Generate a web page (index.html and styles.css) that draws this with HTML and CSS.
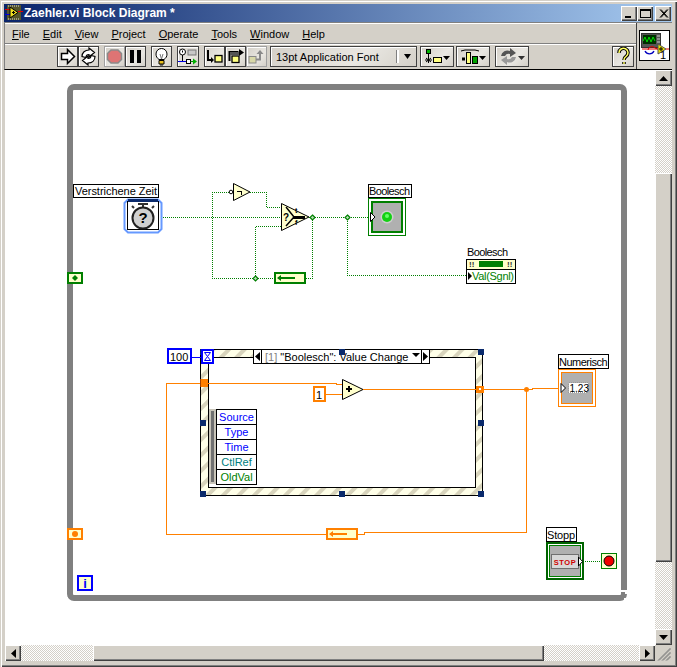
FILE: index.html
```html
<!DOCTYPE html>
<html lang="en">
<head>
<meta charset="utf-8">
<title>Zaehler.vi Block Diagram *</title>
<link rel="stylesheet" href="styles.css">
</head>
<body>
<div class="window">
  <header class="titlebar">
    <svg class="title-icon" width="18" height="16" viewBox="0 0 18 16">
      <rect x="2" y="0" width="14" height="15" fill="#55552a"/>
      <path d="M3 1h1M5 1h1M7 1h1M9 1h1M11 1h1M13 1h1M3 14h1M5 14h1M7 14h1M9 14h1M11 14h1M13 14h1" stroke="#ddd"/>
      <path d="M0 4.500h5" stroke="#e00000" class="crisp"/>
      <path d="M0 9.500h5" stroke="#0000e0" class="crisp"/>
      <path d="M5 2l8 5.500-8 5.500z" fill="#f0e020" stroke="#000"/>
      <path d="M13 6.500h5" stroke="#e00000" class="crisp"/>
      <path d="M7 7.500h3M8.500 6v3" stroke="#000" class="crisp"/>
    </svg>
    <span class="title-text">Zaehler.vi Block Diagram *</span>
    <div class="win-btns">
      <button class="win-btn"><svg width="13" height="11"><rect x="2" y="8" width="6" height="2" fill="#000"/></svg></button>
      <button class="win-btn"><svg width="13" height="11"><path d="M1.500 1.500h10v8h-10z M1 2.500h11" fill="none" stroke="#000" class="crisp"/></svg></button>
      <button class="win-btn win-close"><svg width="13" height="11"><path d="M3 1.500l7 8M4 1.500l7 8M10 1.500l-7 8M11 1.500l-7 8" stroke="#000" fill="none"/></svg></button>
    </div>
  </header>

  <div class="head">
    <div class="head-main">
      <nav class="menubar">
        <span class="menu-item"><u>F</u>ile</span>
        <span class="menu-item"><u>E</u>dit</span>
        <span class="menu-item"><u>V</u>iew</span>
        <span class="menu-item"><u>P</u>roject</span>
        <span class="menu-item"><u>O</u>perate</span>
        <span class="menu-item"><u>T</u>ools</span>
        <span class="menu-item"><u>W</u>indow</span>
        <span class="menu-item"><u>H</u>elp</span>
      </nav>
      <div class="toolbar">
        <div class="tb-group">
          <button class="tb"><svg width="19" height="19" viewBox="0 0 19 19"><path d="M3.500 6.500h6v-4l7 7-7 7v-4h-6z" fill="#fff" stroke="#000" stroke-width="1.500"/></svg></button>
          <button class="tb"><svg width="19" height="19" viewBox="0 0 19 19"><path id="cyc" d="M3 9.500C3 5.500 6 3 10 3V1l5.500 4.500L10 10V7.500C8 7.500 7 8.500 7 10.500z" fill="#fff" stroke="#000" stroke-width="1.200"/><path d="M16 9.500C16 13.500 13 16 9 16v2l-5.500-4.500L9 9v2.500c2 0 3-1 3-3z" fill="#fff" stroke="#000" stroke-width="1.200"/></svg></button>
        </div>
        <div class="tb-group">
          <button class="tb tb-off"><svg width="19" height="19" viewBox="0 0 19 19"><path d="M6 3h7l3.500 3.500v6L13 16H6l-3.500-3.500v-6z" fill="#de7474" stroke="#8a8a8a" stroke-width="1.500"/></svg></button>
          <button class="tb"><svg width="19" height="19" viewBox="0 0 19 19"><path d="M4 3h4v13H4zM11 3h4v13h-4z" fill="#000"/></svg></button>
        </div>
        <div class="tb-group">
          <button class="tb"><svg width="19" height="19" viewBox="0 0 19 19"><path d="M7 12.500C5 11 4 9.500 4 7a5.500 5.500 0 0 1 11 0c0 2.500-1 4-3 5.500z" fill="#fff" stroke="#000"/><path d="M7 13.500h5v3.500H7z" fill="#e8c020" stroke="#000"/><path d="M8 18h3" stroke="#000"/><path d="M8 7l1.500 5M11 7l-1.500 5" stroke="#777" fill="none"/></svg></button>
        </div>
        <div class="tb-group">
          <button class="tb tb-wide"><svg width="20" height="19" viewBox="0 0 20 19"><circle cx="4.500" cy="5" r="3" fill="#fff" stroke="#000"/><path d="M4.500 3.500v2M4.500 7v0" stroke="#000"/><path d="M4.500 8v6" stroke="#000"/><rect x="10" y="3" width="8" height="5" fill="#c8c8c8" stroke="#777"/><path d="M0 14.500h9" stroke="#0000e0"/><rect x="8.500" y="12.500" width="4" height="4" fill="#fff" stroke="#000"/><path d="M12.500 14.500h4" stroke="#009000"/><path d="M15 11.500l4 3-4 3z" fill="#00b000"/></svg></button>
        </div>
        <div class="tb-group">
          <button class="tb"><svg width="19" height="19" viewBox="0 0 19 19"><path d="M3 3v10h5" fill="none" stroke="#000" stroke-width="2"/><path d="M6 10l3 3-3 3z" fill="#000"/><rect x="10" y="8.500" width="7" height="6.500" fill="#ffff80" stroke="#000" stroke-width="1.300"/></svg></button>
          <button class="tb"><svg width="19" height="19" viewBox="0 0 19 19"><path d="M3.500 14V5h9" fill="none" stroke="#000" stroke-width="2"/><path d="M13 2l5 3.500-5 3.500z" fill="#000"/><path d="M4 5h9v3H4z" fill="#555"/><rect x="6" y="9" width="7" height="6.500" fill="#ffff80" stroke="#000" stroke-width="1.300"/></svg></button>
          <button class="tb tb-off"><svg width="19" height="19" viewBox="0 0 19 19"><rect x="2" y="9.500" width="7" height="6.500" fill="#d8d8a8" stroke="#8a8a8a"/><path d="M9 12.500h4V6" fill="none" stroke="#8a8a8a" stroke-width="2"/><path d="M9.500 7l3.500-4 3.500 4z" fill="#8a8a8a"/></svg></button>
        </div>
        <button class="font-select">
          <span class="font-label">13pt Application Font</span>
          <span class="font-arrow"><svg width="9" height="5"><path d="M1 0h7L4.500 5z" fill="#000"/></svg></span>
        </button>
        <button class="tb tb-menu"><svg width="26" height="19" viewBox="0 0 26 19"><rect x="2.500" y="2.500" width="4" height="4" fill="#00b000" stroke="#000"/><path d="M4.500 7v3M1 13h7M4.500 10v6M2 11l5 4M7 11l-5 4" stroke="#000" fill="none"/><rect x="9.500" y="10.500" width="8" height="5" fill="#ffff80" stroke="#000"/><path d="M19 9h7l-3.500 4z" fill="#000"/></svg></button>
        <button class="tb tb-menu tb-menu-end"><svg width="26" height="19" viewBox="0 0 26 19"><path d="M1 4l4-1h10l4 1" fill="none" stroke="#000"/><rect x="2" y="10.500" width="3" height="3" fill="#000"/><rect x="6.500" y="5.500" width="4" height="11" fill="#ffff80" stroke="#000"/><rect x="12.500" y="9.500" width="5" height="7" fill="#00a000" stroke="#000"/><path d="M19 9h7l-3.500 4z" fill="#000"/></svg></button>
        <button class="tb tb-menu"><svg width="26" height="19" viewBox="0 0 26 19"><path d="M2 9a6.500 6.500 0 0 1 9-5V1l6 5-6 4V7a4 4 0 0 0-5 2z" fill="#555"/><path d="M17 10a6.500 6.500 0 0 1-9 5v3l-6-5 6-4v3a4 4 0 0 0 5-2z" fill="#999"/><path d="M19 9h7l-3.500 4z" fill="#333"/></svg></button>
        <button class="tb tb-help"><svg width="19" height="19" viewBox="0 0 19 19"><path d="M5 6a4.500 4.500 0 1 1 7 3.500c-1.500 1-2 1.500-2 3.500M10 15v2" fill="none" stroke="#000" stroke-width="3.500"/><path d="M5 6a4.500 4.500 0 1 1 7 3.500c-1.500 1-2 1.500-2 3.500M10 15v2" fill="none" stroke="#ffff60" stroke-width="1.500"/></svg></button>
      </div>
    </div>
    <aside class="vi-panel">
      <div class="vi-icon">
        <svg width="29" height="29" viewBox="0 0 29 29">
          <rect x="1.500" y="2.500" width="19" height="14" fill="#555" stroke="#333"/>
          <rect x="3" y="4" width="13" height="9" fill="#003000"/>
          <path d="M3 10l2-4 2 5 2-5 2 5 2-5 2 4" fill="none" stroke="#00e000"/>
          <path d="M17 5h3M17 8h3M17 11h3" stroke="#ccc"/>
          <path d="M5 20a5 5 0 0 0 9 0" fill="none" stroke="#0000c0" stroke-width="1.300"/>
          <path d="M8 19a4 4 0 0 1 7-2l8 3" fill="none" stroke="#e00000"/>
          <path d="M2 18h20" stroke="#e00000"/>
          <path d="M18 13l8 5-8 5z" fill="#e8e000" stroke="#555"/>
          <path d="M19 18h4M21 16v4" stroke="#000"/>
          <path d="M26 18h3" stroke="#e00000"/>
          <text x="20" y="28" class="vi-num">1</text>
        </svg>
      </div>
    </aside>
  </div>

  <div class="workspace">
    <main class="canvas">
      <svg class="diagram" width="650" height="575" viewBox="5 70 650 575">
        <defs>
          <pattern id="stripes" patternUnits="userSpaceOnUse" width="11" height="11" patternTransform="rotate(45)">
            <rect width="11" height="11" fill="#ffffe8"/>
            <rect width="4" height="11" fill="#d8d4bc"/>
          </pattern>
        </defs>

        <!-- While loop -->
        <rect class="loop" x="70" y="87" width="554" height="511" rx="4"/>
        <path class="white-fill crisp" d="M621 590h6v2h-6zM625 592h2v2h-2zM624 598h3v3h-3z"/>
        <path class="white-fill crisp" d="M67 597h1v4h-1zM68 599h1v2h-1z"/>

        <!-- Boolean wires -->
        <g class="wire-bool crisp">
          <path d="M163 217.500H369"/>
          <path d="M229 192.500H212.500V278.500H274"/>
          <path d="M250 192.500H266.500V207.500H281"/>
          <path d="M255.500 278V226.500H281"/>
          <path d="M306 278.500H312.500V217"/>
          <path d="M347.500 217V275.500H466"/>
          <path d="M585 561.500H601"/>
        </g>
        <g class="junc-bool">
          <path d="M312.500 215l2.500 2.500-2.500 2.500-2.500-2.500z"/>
          <path d="M347.500 215l2.500 2.500-2.500 2.500-2.500-2.500z"/>
          <path d="M255.500 276l2.500 2.500-2.500 2.500-2.500-2.500z"/>
        </g>

        <!-- Shift registers -->
        <rect class="sr sr-bool crisp" x="68" y="273" width="14" height="10"/>
        <path class="fill-bool" d="M75 275l3 3-3 3-3-3z"/>
        <rect class="sr sr-bool crisp" x="275" y="273" width="30" height="10"/>
        <path class="fill-bool" d="M281 275v2h14v2h-14v2l-4-3z"/>

        <!-- Elapsed time express VI -->
        <rect class="label-box crisp" x="73.500" y="184.500" width="85" height="13"/>
        <text class="t" x="75" y="195" textLength="82">Verstrichene Zeit</text>
        <path class="ev-frame" d="M128 199.500h30l3.500 3.500v26l-3.500 3.500h-30l-3.500-3.500v-26z"/>
        <rect class="ev-inner crisp" x="127.500" y="201.500" width="31" height="28"/>
        <rect class="fill-navy crisp" x="128" y="199" width="30" height="3"/>
        <rect class="fill-dark crisp" x="138" y="203" width="10" height="2"/>
        <rect class="fill-dark crisp" x="142" y="204" width="2" height="3"/>
        <path class="stroke-dark" d="M134 208l-2-2M152 208l2-2"/>
        <circle class="clock" cx="143" cy="218" r="10.500"/>
        <text class="clock-q" x="143" y="223">?</text>

        <!-- Not -->
        <path class="prim" d="M233.500 183.500l16.500 8.500-16.500 8.500z"/>
        <circle class="not-dot" cx="231" cy="192" r="1.800"/>
        <path class="stroke-black crisp" d="M237 191.500h4v3"/>

        <!-- Select -->
        <path class="prim" d="M281.500 203.500l27.500 13.500-27.500 13.500z"/>
        <path class="sel-y" d="M286 207l8 10-8 9"/>
        <path class="sel-y-thick crisp" d="M293 217h12"/>
        <text class="sel-q" x="283" y="221">?</text>
        <text class="sel-t" x="295" y="213">t</text>
        <text class="sel-t" x="295" y="225">f</text>

        <!-- Boolesch LED -->
        <rect class="label-box crisp" x="368.500" y="184.500" width="43" height="13"/>
        <text class="t" x="369" y="195" textLength="41">Boolesch</text>
        <rect class="term-outer-bool crisp" x="368.500" y="198.500" width="37" height="37"/>
        <rect class="term-inner-bool crisp" x="372" y="202" width="30" height="30"/>
        <path class="term-arrow" d="M370.500 212.500l4.500 4.500-4.500 4.500z"/>
        <circle class="led-halo" cx="387" cy="217" r="6.500"/>
        <circle class="led" cx="387" cy="217" r="5"/>
        <circle class="led-hi" cx="387" cy="216" r="2"/>

        <!-- Boolesch property node -->
        <text class="t" x="467" y="256" textLength="41">Boolesch</text>
        <rect class="node-head crisp" x="466.500" y="259.500" width="49" height="10"/>
        <rect class="node-body crisp" x="466.500" y="269.500" width="49" height="14"/>
        <rect class="fill-bool crisp" x="479" y="261" width="24" height="6"/>
        <text class="bang" x="469" y="267">!!</text>
        <text class="bang" x="507" y="267">!!</text>
        <path class="fill-black" d="M468 272l4 4-4 4z"/>
        <text class="t t-bool" x="472" y="280" textLength="42">Val(Sgnl)</text>

        <!-- Event structure -->
        <rect class="frame" x="200.500" y="349.500" width="282" height="146"/>
        <rect class="frame-in crisp" x="208.500" y="357.500" width="267" height="130"/>
        <rect class="selector crisp" x="253.500" y="349.500" width="176" height="14"/>
        <path class="stroke-black crisp" d="M261.500 350v13M421.500 350v13"/>
        <path class="fill-black" d="M260 352v9l-5-4.500zM423 352v9l5-4.500z"/>
        <text class="t" x="265" y="361"><tspan class="t-gray">[1]</tspan> "Boolesch": Value Change</text>
        <path class="fill-black" d="M412 353h8l-4 4z"/>
        <g class="fill-navy crisp">
          <rect x="200" y="349" width="6" height="6"/>
          <rect x="339" y="349" width="6" height="6"/>
          <rect x="478" y="349" width="6" height="6"/>
          <rect x="200" y="420" width="6" height="6"/>
          <rect x="478" y="420" width="6" height="6"/>
          <rect x="200" y="491" width="6" height="6"/>
          <rect x="339" y="491" width="6" height="6"/>
          <rect x="478" y="491" width="6" height="6"/>
        </g>

        <!-- Timeout -->
        <path class="wire-blue crisp" d="M192 357.500H202"/>
        <rect class="num-box num-blue crisp" x="168" y="349" width="23" height="14"/>
        <text class="t" x="170" y="361">100</text>
        <rect class="num-box num-blue crisp" x="202" y="350" width="11" height="13"/>
        <path class="hourglass" d="M204.500 352.500h6l-3 4 3 4h-6l3-4z"/>

        <!-- Event data node -->
        <rect class="ed-side crisp" x="209" y="409" width="7.500" height="75"/>
        <rect class="ed-bar crisp" x="211" y="411" width="3" height="71"/>
        <g class="ed-row crisp">
          <rect x="216.500" y="409.500" width="40" height="15"/>
          <rect x="216.500" y="424.500" width="40" height="15"/>
          <rect x="216.500" y="439.500" width="40" height="15"/>
          <rect x="216.500" y="454.500" width="40" height="15"/>
          <rect x="216.500" y="469.500" width="40" height="15"/>
        </g>
        <text class="t t-mid t-blue" x="236.500" y="421">Source</text>
        <text class="t t-mid t-blue" x="236.500" y="436">Type</text>
        <text class="t t-mid t-blue" x="236.500" y="451">Time</text>
        <text class="t t-mid t-teal" x="236.500" y="466">CtlRef</text>
        <text class="t t-mid t-bool" x="236.500" y="481">OldVal</text>

        <!-- Numeric wires -->
        <g class="wire-num crisp">
          <path d="M342 384.500H336.500V383.500H166.500V534.500H327"/>
          <path d="M326 394.500H342"/>
          <path d="M363 389.500H532.500V388.500H558"/>
          <path d="M526.500 389V532.500H364.500V534.500H358"/>
        </g>
        <circle class="fill-num" cx="526.500" cy="389.500" r="2.500"/>

        <rect class="fill-num crisp" x="200" y="379" width="8" height="8"/>
        <path class="tunnel-edge crisp" d="M200.500 379v8"/>
        <rect class="fill-num crisp" x="476" y="386" width="8" height="7"/>
        <rect class="white-fill crisp" x="479" y="388" width="2" height="2"/>

        <rect class="num-box num-orange crisp" x="314" y="387" width="11" height="14"/>
        <text class="t" x="316" y="399">1</text>

        <path class="prim" d="M342.500 379.500l20.500 10-20.500 10z"/>
        <path class="stroke-black-2 crisp" d="M346 389h6M349 386v6"/>

        <!-- Numerisch -->
        <rect class="label-box crisp" x="558.500" y="354.500" width="50" height="14"/>
        <text class="t" x="559" y="366" textLength="48.500">Numerisch</text>
        <rect class="term-outer-num crisp" x="558.500" y="369.500" width="37" height="37"/>
        <rect class="term-inner-num crisp" x="561.500" y="372.500" width="31" height="31"/>
        <path class="term-arrow" d="M561 383.500l4.500 4.500-4.500 4.500z"/>
        <rect class="num-ind crisp" x="568.500" y="382.500" width="19" height="10"/>
        <text class="t-small" x="569.500" y="392">1.23</text>

        <!-- Orange shift registers -->
        <rect class="sr sr-num crisp" x="68" y="529" width="14" height="10"/>
        <circle class="fill-num" cx="75" cy="534" r="3"/>
        <rect class="sr sr-num crisp" x="327" y="529" width="30" height="10"/>
        <path class="fill-num" d="M333 531v2h14v2h-14v2l-4-3z"/>

        <!-- Iteration terminal -->
        <rect class="num-blue-term crisp" x="78" y="576" width="14" height="14"/>
        <text class="i-term" x="85" y="588">i</text>

        <!-- Stop -->
        <rect class="label-box crisp" x="546.500" y="527.500" width="30" height="14"/>
        <text class="t" x="547" y="539" textLength="28">Stopp</text>
        <rect class="term-outer-stop crisp" x="547" y="543" width="36" height="36"/>
        <rect class="term-inner-stop crisp" x="549.500" y="545.500" width="31" height="31"/>
        <rect class="stop-btn crisp" x="551.500" y="554.500" width="27" height="14"/>
        <text class="stop-text" x="565" y="564.500">STOP</text>
        <path class="term-arrow" d="M578.500 557l4 4.500-4 4.500z"/>

        <rect class="cond crisp" x="601.500" y="553.500" width="15" height="15"/>
        <circle class="cond-dot" cx="609" cy="561" r="5"/>
      </svg>
    </main>

    <div class="vscroll">
      <button class="sb-btn"><svg width="9" height="5"><path d="M4.500 0L9 5H0z" fill="#000"/></svg></button>
      <div class="track track-a"></div>
      <div class="thumb thumb-v"></div>
      <div class="track"></div>
      <button class="sb-btn"><svg width="9" height="5"><path d="M0 0h9L4.500 5z" fill="#000"/></svg></button>
    </div>

    <div class="hscroll">
      <button class="sb-btn"><svg width="5" height="9"><path d="M5 0v9L0 4.500z" fill="#000"/></svg></button>
      <div class="track track-b"></div>
      <div class="thumb thumb-h"></div>
      <div class="track"></div>
      <button class="sb-btn"><svg width="5" height="9"><path d="M0 0l5 4.500L0 9z" fill="#000"/></svg></button>
    </div>
    <div class="grip">
      <svg width="17" height="16"><path d="M15.500 3L3 15.500M15.500 4L4 15.500M15.500 7L7 15.500M15.500 8L8 15.500M15.500 11L11 15.500M15.500 12L12 15.500" stroke="#808080"/></svg>
    </div>
  </div>
</div>
</body>
</html>
```
FILE: styles.css
```css
* { box-sizing: border-box; }
html, body { margin: 0; padding: 0; }
body { font-family: "Liberation Sans", sans-serif; font-size: 11px; color: #000; }
button { padding: 0; margin: 0; font: inherit; color: inherit; }

.window {
  width: 677px;
  height: 667px;
  background: #d4d0c8;
  padding: 4px 5px 5px 4px;
  overflow: hidden;
  box-shadow: inset 1px 1px 0 #d4d0c8, inset 2px 2px 0 #fff, inset -1px -1px 0 #404040, inset -2px -2px 0 #808080;
  display: flex;
  flex-direction: column;
}

.titlebar {
  height: 18px;
  flex: none;
  display: flex;
  align-items: center;
  background: linear-gradient(90deg, #0a246a, #a6caf0);
}
.title-icon { margin: 0 1px 0 1px; flex: none; }
.title-text { color: #fff; font-weight: 700; font-size: 12px; white-space: nowrap; }
.win-btns { margin-left: auto; display: flex; margin-right: 1px; }
.win-btn {
  width: 16px;
  height: 15px;
  display: flex;
  align-items: center;
  justify-content: center;
  background: #d4d0c8;
  border: 0;
  box-shadow: inset 1px 1px 0 #fff, inset -1px -1px 0 #404040, inset -2px -2px 0 #808080;
}
.win-close { margin-left: 2px; }

.head {
  flex: none;
  height: 48px;
  display: flex;
  border-left: 1px solid #808080;
  border-top: 1px solid #808080;
  border-bottom: 1px solid #000;
}
.head-main { width: 631px; flex: none; display: flex; flex-direction: column; }
.menubar {
  height: 21px;
  flex: none;
  display: flex;
  align-items: center;
  padding: 1px 0 0 7px;
  gap: 13px;
  border-bottom: 1px solid #808080;
  box-shadow: inset 0 1px 0 #fff;
}
.menu-item { font-size: 11px; }
.toolbar {
  flex: 1;
  display: flex;
  align-items: flex-start;
  padding: 2px 0 0 52px;
  box-shadow: inset 0 1px 0 #fff;
}
.tb-group { display: flex; margin-right: 5px; flex: none; }
.tb {
  width: 21px;
  height: 21px;
  flex: none;
  display: flex;
  align-items: center;
  justify-content: center;
  background: linear-gradient(135deg, #d4d0c8, #e9e7e2 60%, #d4d0c8);
  border: 1px solid #404040;
  box-shadow: inset 1px 1px 0 #fff;
}
.tb-wide { width: 22px; }
.tb-off { border-color: #a0a0a0; }
.font-select {
  width: 147px;
  height: 21px;
  flex: none;
  margin-left: -2px;
  margin-right: 3px;
  display: flex;
  align-items: center;
  background: linear-gradient(135deg, #d4d0c8, #e9e7e2 60%, #d4d0c8);
  border: 1px solid #404040;
  box-shadow: inset 1px 1px 0 #fff;
}
.font-label { flex: 1; text-align: left; padding-left: 5px; font-size: 11px; white-space: nowrap; }
.font-arrow {
  width: 18px;
  height: 13px;
  display: flex;
  align-items: center;
  justify-content: center;
  border-left: 2px solid #fff;
  box-shadow: -1px 0 0 #808080;
  margin-right: 1px;
}
.tb-menu { width: 34px; margin-right: 2px; }
.tb-menu-end { margin-right: 5px; }
.tb-help { width: 22px; margin-left: 81px; }

.vi-panel {
  width: 36px;
  flex: none;
  border-left: 1px solid #404040;
  display: flex;
  padding: 7px 0 0 2px;
}
.vi-icon { width: 31px; height: 31px; background: #fff; border: 1px solid #000; }
.vi-icon svg { display: block; }
.vi-num { font: 11px "Liberation Sans", sans-serif; fill: #000; }

.workspace {
  flex: none;
  display: grid;
  grid-template-columns: 650px 17px;
  grid-template-rows: 575px 16px;
  margin-left: 1px;
}
.canvas { background: #fff; overflow: hidden; }
.diagram { display: block; }

.vscroll, .hscroll { display: flex; }
.vscroll { flex-direction: column; }
.track {
  flex: 1;
  background: repeating-conic-gradient(#fff 0 25%, #d4d0c8 0 50%) 0 0 / 2px 2px;
}
.track-a { flex: none; height: 87px; }
.track-b { flex: none; width: 72px; }
.thumb-v { height: 389px; flex: none; }
.thumb-h { width: 451px; flex: none; }
.thumb, .sb-btn {
  background: #d4d0c8;
  border: 0;
  box-shadow: inset 1px 1px 0 #fff, inset -1px -1px 0 #404040, inset -2px -2px 0 #808080;
}
.sb-btn {
  flex: none;
  display: flex;
  align-items: center;
  justify-content: center;
}
.vscroll .sb-btn { height: 16px; }
.hscroll .sb-btn { width: 16px; }
.grip { background: #d4d0c8; }
.grip svg { display: block; }

/* Diagram */
.crisp { shape-rendering: crispEdges; }
.loop { fill: none; stroke: #808080; stroke-width: 6; }
.white-fill { fill: #fff; }
.wire-bool { fill: none; stroke: #007f00; stroke-width: 1; stroke-dasharray: 1 1; }
.junc-bool { fill: #b8e0b8; stroke: #007f00; stroke-width: 1.200; }
.fill-bool { fill: #007f00; }
.fill-num { fill: #ff8000; }
.fill-navy { fill: #0a2a6c; }
.fill-dark { fill: #303030; }
.fill-black { fill: #000; }
.stroke-dark { stroke: #303030; stroke-width: 2; fill: none; }
.stroke-black { stroke: #000; fill: none; }
.stroke-black-2 { stroke: #000; fill: none; stroke-width: 2; }
.sr { fill: #ffffcc; stroke-width: 2; }
.sr-bool { stroke: #007f00; }
.sr-num { stroke: #ff8000; }

.t { font: 11px "Liberation Sans", sans-serif; fill: #000; }
.t-mid { text-anchor: middle; }
.t-bool { fill: #007f00; }
.t-blue { fill: #0000ff; }
.t-teal { fill: #008080; }
.t-gray { fill: #808080; }
.t-small { font: 10px "Liberation Sans", sans-serif; fill: #000; }
.label-box { fill: #fff; stroke: #000; }

.ev-frame { fill: #fff; stroke: #6699ff; stroke-width: 2; }
.ev-inner { fill: #fff; stroke: #000; }
.clock { fill: #d0d0d0; stroke: #202020; stroke-width: 2; }
.clock-q { font: 700 15px "Liberation Sans", sans-serif; text-anchor: middle; fill: #000; }

.prim { fill: #ffffcc; stroke: #000; }
.not-dot { fill: #fff; stroke: #000; }
.sel-y { fill: none; stroke: #000; stroke-width: 1.500; }
.sel-y-thick { fill: none; stroke: #000; stroke-width: 3; }
.sel-q { font: 700 10px "Liberation Sans", sans-serif; fill: #000; }
.sel-t { font: 700 7px "Liberation Sans", sans-serif; fill: #000; }

.term-outer-bool { fill: #fff; stroke: #007f00; }
.term-inner-bool { fill: #b0b0b0; stroke: #007f00; stroke-width: 2; }
.term-arrow { fill: #fff; stroke: #000; }
.led-halo { fill: #d8d8d8; opacity: .75; }
.led { fill: #14d014; }
.led-hi { fill: #66ff66; }

.node-head { fill: #ffffcc; stroke: #000; }
.node-body { fill: #fff; stroke: #000; }
.bang { font: 700 8px "Liberation Sans", sans-serif; fill: #333; }

.frame { fill: url(#stripes); stroke: #000; }
.frame-in { fill: #fff; stroke: #000; }
.selector { fill: #fff; stroke: #000; }

.wire-blue { stroke: #0000ff; fill: none; }
.num-box { fill: #fff; stroke-width: 2; }
.num-blue { stroke: #0000ff; }
.num-orange { stroke: #ff8000; }
.hourglass { fill: #ffffff; stroke: #0000ff; }

.ed-side { fill: #c8c4b8; stroke: none; }
.ed-bar { fill: #707070; }
.ed-row rect { fill: #fff; stroke: #000; }

.wire-num { fill: none; stroke: #ff8000; }
.tunnel-edge { stroke: #a04000; }

.term-outer-num { fill: #fff; stroke: #ff8000; }
.term-inner-num { fill: #b0b0b0; stroke: #ff8000; }
.num-ind { fill: #fff; stroke: #999; stroke-dasharray: 1 1; }

.num-blue-term { fill: #ffffcc; stroke: #0000ff; stroke-width: 2; }
.i-term { font: 700 13px "Liberation Sans", sans-serif; fill: #0000ff; text-anchor: middle; }

.term-outer-stop { fill: #fff; stroke: #006400; stroke-width: 2; }
.term-inner-stop { fill: #b0b0b0; stroke: #007f00; }
.stop-btn { fill: #d8d8d8; stroke: #707070; stroke-width: 1; }
.stop-text { font: 700 7.500px "Liberation Sans", sans-serif; fill: #d00000; text-anchor: middle; letter-spacing: .5px; }

.cond { fill: #ffffcc; stroke: #007f00; }
.cond-dot { fill: #f00000; stroke: #000; }
```
